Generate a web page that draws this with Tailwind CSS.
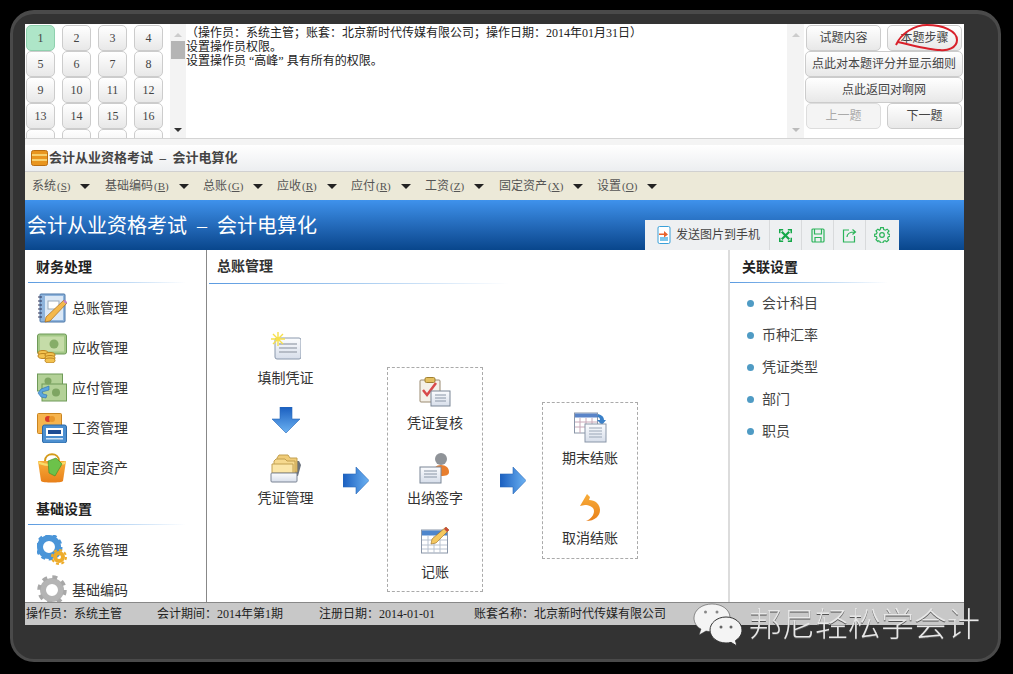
<!DOCTYPE html>
<html lang="zh-CN">
<head>
  <meta charset="UTF-8" />
  <meta name="viewport" content="width=device-width, initial-scale=1.0" />
  <title>会计从业资格考试 - 会计电算化</title>
  <script src="https://cdn.jsdelivr.net/npm/@tailwindcss/browser@4"></script>
</head>
<body class="bg-black w-[1013px] h-[674px] overflow-hidden font-['Liberation_Serif','Noto_Sans_CJK_SC',serif] text-[#333]">
  <svg width="0" height="0" class="absolute">
    <defs>
      <linearGradient id="blueH" x1="0" x2="1" y1="0" y2="0"><stop offset="0" stop-color="#1a5fc0"/><stop offset="1" stop-color="#6cb2f2"/></linearGradient>
      <linearGradient id="blueV" x1="0" x2="0" y1="0" y2="1"><stop offset="0" stop-color="#1a5fc0"/><stop offset="1" stop-color="#6cb2f2"/></linearGradient>
      <linearGradient id="paper" x1="0" x2="0" y1="0" y2="1"><stop offset="0" stop-color="#fbfcfe"/><stop offset="1" stop-color="#d7deea"/></linearGradient>
      <linearGradient id="orange" x1="0" x2="0" y1="0" y2="1"><stop offset="0" stop-color="#f8ad3a"/><stop offset="1" stop-color="#e8801a"/></linearGradient>
    </defs>
  </svg>

  <!-- outer window frame -->
  <div class="relative mt-[10px] ml-[10px] w-[991px] h-[652px] rounded-[24px] bg-[#333] border-[3px] border-t-[4px] border-[#4a4a4a] pt-[10px] pl-[12px]">
    <div class="w-[939px] h-[601px] bg-white flex flex-col overflow-hidden">

      <!-- question panel -->
      <div class="h-[114px] flex bg-white shrink-0">
        <div class="w-[145px] h-[114px] overflow-hidden pl-px pt-px shrink-0">
          <div class="grid grid-cols-[29px_29px_29px_29px] gap-x-[7px] auto-rows-[26px] text-[12px] text-[#444]">
            <div class="rounded-[5px] border border-[#8fd0ae] bg-[#aee6c8] flex items-center justify-center">1</div>
            <div class="rounded-[5px] border border-[#ccc] bg-linear-to-b from-white to-[#e8e8e8] flex items-center justify-center">2</div>
            <div class="rounded-[5px] border border-[#ccc] bg-linear-to-b from-white to-[#e8e8e8] flex items-center justify-center">3</div>
            <div class="rounded-[5px] border border-[#ccc] bg-linear-to-b from-white to-[#e8e8e8] flex items-center justify-center">4</div>
            <div class="rounded-[5px] border border-[#ccc] bg-linear-to-b from-white to-[#e8e8e8] flex items-center justify-center">5</div>
            <div class="rounded-[5px] border border-[#ccc] bg-linear-to-b from-white to-[#e8e8e8] flex items-center justify-center">6</div>
            <div class="rounded-[5px] border border-[#ccc] bg-linear-to-b from-white to-[#e8e8e8] flex items-center justify-center">7</div>
            <div class="rounded-[5px] border border-[#ccc] bg-linear-to-b from-white to-[#e8e8e8] flex items-center justify-center">8</div>
            <div class="rounded-[5px] border border-[#ccc] bg-linear-to-b from-white to-[#e8e8e8] flex items-center justify-center">9</div>
            <div class="rounded-[5px] border border-[#ccc] bg-linear-to-b from-white to-[#e8e8e8] flex items-center justify-center">10</div>
            <div class="rounded-[5px] border border-[#ccc] bg-linear-to-b from-white to-[#e8e8e8] flex items-center justify-center">11</div>
            <div class="rounded-[5px] border border-[#ccc] bg-linear-to-b from-white to-[#e8e8e8] flex items-center justify-center">12</div>
            <div class="rounded-[5px] border border-[#ccc] bg-linear-to-b from-white to-[#e8e8e8] flex items-center justify-center">13</div>
            <div class="rounded-[5px] border border-[#ccc] bg-linear-to-b from-white to-[#e8e8e8] flex items-center justify-center">14</div>
            <div class="rounded-[5px] border border-[#ccc] bg-linear-to-b from-white to-[#e8e8e8] flex items-center justify-center">15</div>
            <div class="rounded-[5px] border border-[#ccc] bg-linear-to-b from-white to-[#e8e8e8] flex items-center justify-center">16</div>
            <div class="rounded-[5px] border border-[#ccc] bg-linear-to-b from-white to-[#e8e8e8]"></div>
            <div class="rounded-[5px] border border-[#ccc] bg-linear-to-b from-white to-[#e8e8e8]"></div>
            <div class="rounded-[5px] border border-[#ccc] bg-linear-to-b from-white to-[#e8e8e8]"></div>
            <div class="rounded-[5px] border border-[#ccc] bg-linear-to-b from-white to-[#e8e8e8]"></div>
          </div>
        </div>
        <!-- left scrollbar -->
        <div class="w-[16px] h-[114px] bg-[#f3f3f3] flex flex-col items-center shrink-0">
          <div class="mt-[9px] w-0 h-0 border-x-[4px] border-x-transparent border-b-[4px] border-b-[#ccc]"></div>
          <div class="mt-[4px] w-[14px] h-[18px] bg-[#b5b5b5]"></div>
          <div class="mt-auto mb-[6px] w-0 h-0 border-x-[4px] border-x-transparent border-t-[4px] border-t-[#333]"></div>
        </div>
        <div class="w-[601px] shrink-0 pt-[2px] text-[12px] leading-[14px] text-[#222]">
          <p>（操作员：系统主管；账套：北京新时代传媒有限公司；操作日期：2014年01月31日）</p>
          <p>设置操作员权限。</p>
          <p>设置操作员 “高峰” 具有所有的权限。</p>
        </div>
        <!-- right scrollbar -->
        <div class="w-[17px] h-[114px] bg-[#f3f3f3] flex flex-col items-center shrink-0">
          <div class="mt-[9px] w-0 h-0 border-x-[4px] border-x-transparent border-b-[4px] border-b-[#ccc]"></div>
          <div class="mt-auto mb-[6px] w-0 h-0 border-x-[4px] border-x-transparent border-t-[4px] border-t-[#bbb]"></div>
        </div>
        <!-- question buttons -->
        <div class="w-[160px] shrink-0 pt-px px-px text-[12px] text-[#444]">
          <div class="h-[26px] flex justify-between px-px">
            <div class="w-[75px] rounded-[5px] border border-[#ccc] bg-linear-to-b from-white to-[#e8e8e8] flex items-center justify-center">试题内容</div>
            <div class="w-[75px] rounded-[5px] border border-[#ccc] bg-linear-to-b from-white to-[#e8e8e8] flex items-center justify-center">本题步骤</div>
          </div>
          <div class="h-[26px] rounded-[5px] border border-[#ccc] bg-linear-to-b from-white to-[#e8e8e8] flex items-center justify-center">点此对本题评分并显示细则</div>
          <div class="h-[26px] rounded-[5px] border border-[#ccc] bg-linear-to-b from-white to-[#e8e8e8] flex items-center justify-center">点此返回对啊网</div>
          <div class="h-[26px] flex justify-between px-px">
            <div class="w-[75px] rounded-[5px] border border-[#ddd] bg-[#f4f4f4] text-[#aaa] flex items-center justify-center">上一题</div>
            <div class="w-[75px] rounded-[5px] border border-[#ccc] bg-linear-to-b from-white to-[#e8e8e8] flex items-center justify-center">下一题</div>
          </div>
        </div>
      </div>
      <div class="h-[7px] shrink-0 bg-[#f4f4f4] border-t border-[#d4d4d4]"></div>

      <!-- title bar -->
      <div class="h-[27px] shrink-0 flex items-center pl-[6px] bg-linear-to-b from-white to-[#eceef0] border-b border-[#d0d0d0]">
        <svg width="17" height="16" viewBox="0 0 17 16" class="shrink-0">
          <rect x="0.5" y="0.5" width="16" height="15" rx="2" fill="#e8951f" stroke="#b96d12"/>
          <path d="M1 5h15M1 10h15" stroke="#fbe38a" stroke-width="1.6"/>
        </svg>
        <span class="ml-px text-[13px] font-bold text-[#444] whitespace-pre">会计从业资格考试  –  会计电算化</span>
      </div>

      <!-- menu bar -->
      <div class="h-[28px] shrink-0 flex items-center pl-[7px] bg-[#ece9d8] text-[12px] text-[#555]">
        <div class="w-[73px] shrink-0 flex items-center"><span>系统</span><span class="ml-px text-[11px]">(<u>S</u>)</span><span class="ml-[10px] w-0 h-0 border-x-[5px] border-x-transparent border-t-[5px] border-t-[#222]"></span></div>
        <div class="w-[98px] shrink-0 flex items-center"><span>基础编码</span><span class="ml-px text-[11px]">(<u>B</u>)</span><span class="ml-[10px] w-0 h-0 border-x-[5px] border-x-transparent border-t-[5px] border-t-[#222]"></span></div>
        <div class="w-[74px] shrink-0 flex items-center"><span>总账</span><span class="ml-px text-[11px]">(<u>G</u>)</span><span class="ml-[10px] w-0 h-0 border-x-[5px] border-x-transparent border-t-[5px] border-t-[#222]"></span></div>
        <div class="w-[74px] shrink-0 flex items-center"><span>应收</span><span class="ml-px text-[11px]">(<u>R</u>)</span><span class="ml-[10px] w-0 h-0 border-x-[5px] border-x-transparent border-t-[5px] border-t-[#222]"></span></div>
        <div class="w-[74px] shrink-0 flex items-center"><span>应付</span><span class="ml-px text-[11px]">(<u>R</u>)</span><span class="ml-[10px] w-0 h-0 border-x-[5px] border-x-transparent border-t-[5px] border-t-[#222]"></span></div>
        <div class="w-[74px] shrink-0 flex items-center"><span>工资</span><span class="ml-px text-[11px]">(<u>Z</u>)</span><span class="ml-[10px] w-0 h-0 border-x-[5px] border-x-transparent border-t-[5px] border-t-[#222]"></span></div>
        <div class="w-[98px] shrink-0 flex items-center"><span>固定资产</span><span class="ml-px text-[11px]">(<u>X</u>)</span><span class="ml-[10px] w-0 h-0 border-x-[5px] border-x-transparent border-t-[5px] border-t-[#222]"></span></div>
        <div class="w-[74px] shrink-0 flex items-center"><span>设置</span><span class="ml-px text-[11px]">(<u>O</u>)</span><span class="ml-[10px] w-0 h-0 border-x-[5px] border-x-transparent border-t-[5px] border-t-[#222]"></span></div>
      </div>

      <!-- banner -->
      <div class="h-[50px] shrink-0 flex justify-between items-end bg-linear-to-b from-[#3f92ec] to-[#08468c]">
        <div class="self-center pl-[2px] mt-[2px] text-[20px] text-white whitespace-pre leading-none">会计从业资格考试  –  会计电算化</div>
        <div class="mr-[65px] h-[30px] w-[254px] bg-[#eef0f2] flex items-center text-[12px] text-[#444]">
          <div class="w-[125px] h-full flex items-center pl-[12px] border-r border-[#d8dadc]">
            <svg width="14" height="18" viewBox="0 0 14 18" class="shrink-0">
              <rect x="1" y="0.5" width="12" height="17" rx="1.5" fill="#fff" stroke="#3aa0d8"/>
              <rect x="3" y="11" width="8" height="4" fill="#7cc6ea"/>
              <path d="M2 7.5h5V5l4 3.5-4 3V9H2z" fill="#e8622a"/>
            </svg>
            <span class="ml-[5px]">发送图片到手机</span>
          </div>
          <div class="w-[32px] h-full flex items-center justify-center border-r border-[#d8dadc]">
            <svg width="13" height="13" viewBox="0 0 14 14" fill="none" stroke="#16a84a" stroke-width="2.400"><path d="M3 3l8 8M11 3l-8 8"/><path d="M0.800 4.500V0.800h3.700M9.500 0.800h3.700v3.700M13.200 9.500v3.700H9.500M4.500 13.200H0.800V9.500" stroke-width="1.600"/></svg>
          </div>
          <div class="w-[32px] h-full flex items-center justify-center border-r border-[#d8dadc]">
            <svg width="14" height="15" viewBox="0 0 14 15" fill="none" stroke="#2bb45a" stroke-width="1.200"><rect x="1" y="1" width="12" height="13" rx="1"/><path d="M3.500 1v5h7V1M4 14V9.500h6V14"/></svg>
          </div>
          <div class="w-[32px] h-full flex items-center justify-center border-r border-[#d8dadc]">
            <svg width="15" height="15" viewBox="0 0 15 15" fill="none" stroke="#2bb45a" stroke-width="1.200"><path d="M7 2H1.500v12h11V8"/><path d="M5 9c0-3 3-5 8-5M10.500 1.500L13.500 4l-3 2.500"/></svg>
          </div>
          <div class="w-[32px] h-full flex items-center justify-center">
            <svg width="16" height="16" viewBox="0 0 24 24" fill="none" stroke="#2bb45a" stroke-width="1.800"><circle cx="12" cy="12" r="3.500"/><path d="M10 2h4l.6 3 2.500 1 2.600-1.600 2.800 2.800L20.400 9.800l1 2.200 2.600.6v3l-2.600.6-1 2.400 1.600 2.600-2.800 2.800-2.600-1.600-2.500 1-.6 2.600h-4l-.6-2.600-2.500-1L5.800 23.800 3 21l1.600-2.600-1-2.400L1 15.400v-3l2.600-.6 1-2.200L3 7.200l2.800-2.800 2.600 1.600 1-1z" transform="translate(0 -1) scale(1 .96)"/></svg>
          </div>
        </div>
      </div>

      <!-- main area -->
      <div class="h-[352px] shrink-0 flex overflow-hidden">
        <!-- sidebar -->
        <div class="w-[182px] shrink-0 border-r border-[#888] pl-[3px] overflow-hidden">
          <div class="h-[32px] flex items-end pl-[8px] pb-[7px] text-[14px] font-bold leading-none text-[#222]">财务处理</div>
          <div class="h-px w-[158px] bg-linear-to-r from-[#5a9ae0] via-[#a8ccf0] to-white"></div>
          <div class="mt-[10px] pl-[9px] flex flex-col gap-[10px] text-[14px] text-[#333]">
            <div class="h-[30px] flex items-center">
              <svg width="30" height="30" viewBox="0 0 30 30" class="shrink-0"><rect x="3" y="1" width="25" height="28" rx="1" fill="#8fb4dc" stroke="#4a77a8"/><rect x="8" y="3" width="18" height="24" fill="#dbe8f6"/><path d="M1 4h4M1 8h4M1 12h4M1 16h4M1 20h4M1 24h4" stroke="#335"/><rect x="11" y="8" width="11" height="8" fill="#fff" stroke="#9ab"/><path d="M27 7l3 3-17 18-5 1 1-5z" fill="#f4b84a" stroke="#a86c1a" stroke-width=".7"/><path d="M26 8l3 3 1-2-2-2z" fill="#c080d0"/></svg>
              <span class="ml-[5px]">总账管理</span>
            </div>
            <div class="h-[30px] flex items-center">
              <svg width="30" height="30" viewBox="0 0 30 30" class="shrink-0"><rect x="0.500" y="1" width="29" height="20" rx="2" fill="#a3c887" stroke="#6e9a58"/><rect x="3" y="3.500" width="24" height="15" fill="#c5dca8"/><circle cx="17" cy="11" r="4.500" fill="#86ad68"/><ellipse cx="6" cy="20" rx="5" ry="2.500" fill="#f3c24f" stroke="#bd8420"/><ellipse cx="6" cy="23" rx="5" ry="2.500" fill="#f3c24f" stroke="#bd8420"/><ellipse cx="13" cy="22" rx="5" ry="2.500" fill="#f3c24f" stroke="#bd8420"/><ellipse cx="13" cy="25" rx="5" ry="2.500" fill="#f3c24f" stroke="#bd8420"/><ellipse cx="13" cy="27.500" rx="5" ry="2.500" fill="#f3c24f" stroke="#bd8420"/></svg>
              <span class="ml-[5px]">应收管理</span>
            </div>
            <div class="h-[30px] flex items-center">
              <svg width="30" height="30" viewBox="0 0 30 30" class="shrink-0"><rect x="0.500" y="1" width="25" height="17" fill="#b3d197" stroke="#6e9a58"/><rect x="5" y="11" width="24.500" height="17" fill="#b3d197" stroke="#6e9a58"/><circle cx="19" cy="19.500" r="4" fill="#7ea562"/><circle cx="11" cy="8" r="3.500" fill="#7ea562"/><path d="M12 13l-8 3 -3 4 3 4 5 1 1-3-4-1-1-2 7-2z" fill="#5aa5df" stroke="#2b70ad" stroke-width=".6"/></svg>
              <span class="ml-[5px]">应付管理</span>
            </div>
            <div class="h-[30px] flex items-center">
              <svg width="30" height="30" viewBox="0 0 30 30" class="shrink-0"><rect x="0.500" y="0.500" width="24" height="20" rx="1" fill="#f6b44e" stroke="#c98420"/><circle cx="11" cy="6" r="3" fill="#d83a2a"/><circle cx="15" cy="6" r="3" fill="#e8962a"/><rect x="5.500" y="12" width="24" height="18" rx="2" fill="#4c8fd0" stroke="#2b68a5"/><rect x="9" y="15" width="17" height="8" fill="#fff"/><rect x="11" y="17" width="13" height="4" fill="#1d4c94"/><rect x="9" y="25" width="17" height="1.500" fill="#cfe2f4"/></svg>
              <span class="ml-[5px]">工资管理</span>
            </div>
            <div class="h-[30px] flex items-center">
              <svg width="30" height="30" viewBox="0 0 30 30" class="shrink-0"><path d="M8 8c0-9 14-9 14 0" fill="none" stroke="#d49a1a" stroke-width="2"/><path d="M1 8h28l-3 20c-1 2-21 2-22 0z" fill="url(#orange)"/><path d="M1 8c8 4 20 4 28 0l-1 3c-8 3-18 3-26 0z" fill="#f9dc6a"/><path d="M11 8l8-3 6 6-7 12-6-3z" fill="#6cc24a" stroke="#3d8a2a" stroke-width=".6"/></svg>
              <span class="ml-[5px]">固定资产</span>
            </div>
          </div>
          <div class="h-[41px] flex items-end pl-[8px] pb-[7px] text-[14px] font-bold leading-none text-[#222]">基础设置</div>
          <div class="h-px w-[158px] bg-linear-to-r from-[#5a9ae0] via-[#a8ccf0] to-white"></div>
          <div class="mt-[10px] pl-[9px] flex flex-col gap-[10px] text-[14px] text-[#333]">
            <div class="h-[30px] flex items-center">
              <svg width="30" height="30" viewBox="0 0 30 30" class="shrink-0"><circle cx="12" cy="12" r="9" fill="none" stroke="#4a95d8" stroke-width="6"/><circle cx="12" cy="12" r="12" fill="none" stroke="#4a95d8" stroke-width="3" stroke-dasharray="4 3.500"/><circle cx="22" cy="22" r="4" fill="none" stroke="#eeac2a" stroke-width="4"/><circle cx="22" cy="22" r="7" fill="none" stroke="#eeac2a" stroke-width="2" stroke-dasharray="3 2.500"/></svg>
              <span class="ml-[5px]">系统管理</span>
            </div>
            <div class="h-[30px] flex items-center">
              <svg width="30" height="30" viewBox="0 0 30 30" class="shrink-0"><circle cx="15" cy="15" r="9" fill="none" stroke="#b4b4b4" stroke-width="6"/><circle cx="15" cy="15" r="13" fill="none" stroke="#a8a8a8" stroke-width="3.500" stroke-dasharray="5 5.200"/></svg>
              <span class="ml-[5px]">基础编码</span>
            </div>
          </div>
        </div>

        <!-- center -->
        <div class="w-[523px] shrink-0 border-r-2 border-[#dcdcdc]">
          <div class="h-[33px] flex items-end pl-[10px] pb-[9px] text-[14px] font-bold leading-none text-[#333]">总账管理</div>
          <div class="h-px ml-[2px] w-[300px] bg-linear-to-r from-[#5a9ae0] via-[#a8ccf0] to-white"></div>

          <div class="flex items-start text-[14px] text-[#333]">
            <!-- first column -->
            <div class="w-[157px] shrink-0 mt-[48px] flex flex-col items-center">
              <svg width="30" height="30" viewBox="0 0 30 30"><rect x="4" y="6" width="26" height="21" rx="2" fill="url(#paper)" stroke="#8a98ac"/><path d="M8 12h18M8 16h18M8 20h18" stroke="#a6adb8" stroke-width="1.500"/><path d="M7 0v14M0 7h14M2 2l10 10M12 2L2 12" stroke="#f7e04a" stroke-width="1.400"/></svg>
              <div class="mt-[8px] leading-[18px]">填制凭证</div>
              <svg class="mt-[19px]" width="28" height="26" viewBox="0 0 28 26"><path d="M8 0h12v12h8L14 26 0 12h8z" fill="url(#blueV)" stroke="#2a68b8" stroke-width=".6"/></svg>
              <svg class="mt-[21px]" width="32" height="30" viewBox="0 0 32 30"><path d="M4 20V7h25l2 4-3 11z" fill="#6b727c"/><path d="M7 4l2-3h9l2 3h7v14H7z" fill="#f0cc78" stroke="#c2a050"/><path d="M4 7l2-2h9l2 2h8v12H4z" fill="#f6d98e" stroke="#c2a050"/><path d="M2 10h21v9H2z" fill="#fbe6a8" stroke="#c2a050"/><rect x="1" y="19" width="26" height="9" rx="1" fill="url(#paper)" stroke="#7b8494"/></svg>
              <div class="mt-[6px] leading-[18px]">凭证管理</div>
            </div>
            <!-- arrow 1 -->
            <svg class="mt-[183px] ml-[-21px] shrink-0" width="26" height="27" viewBox="0 0 26 27"><path d="M0 7h13V0l13 13.500L13 27v-7H0z" fill="url(#blueH)" stroke="#2a68b8" stroke-width=".6"/></svg>
            <!-- review box -->
            <div class="ml-[18px] mt-[83px] w-[96px] h-[225px] shrink-0 border border-dashed border-[#aaa] flex flex-col items-center pt-[9px]">
              <svg width="32" height="30" viewBox="0 0 32 30"><rect x="1" y="3" width="20" height="22" rx="1" fill="#f4f0e8" stroke="#9a8a70"/><rect x="6" y="0.500" width="10" height="5" rx="1.500" fill="#e4c060" stroke="#a08030"/><path d="M4 13l4 5 9-12" fill="none" stroke="#d84a4a" stroke-width="2.500"/><rect x="12" y="14" width="19" height="15" fill="url(#paper)" stroke="#7a8696"/><path d="M16 18h11M16 21h11M16 24h11" stroke="#8a96a6"/></svg>
              <div class="mt-[8px] leading-[18px]">凭证复核</div>
              <svg class="mt-[19px]" width="32" height="32" viewBox="0 0 32 32"><circle cx="22" cy="7" r="6" fill="#8f9398"/><path d="M14 21c0-5 3-8 8-8s8 3 8 7c0 3-3 4-8 4z" fill="#e87e2e"/><rect x="1" y="15" width="21" height="16" fill="url(#paper)" stroke="#7a8696"/><path d="M5 19h13M5 22h13M5 25h13" stroke="#8a96a6"/></svg>
              <div class="mt-[6px] leading-[18px]">出纳签字</div>
              <svg class="mt-[19px]" width="28" height="27" viewBox="0 0 28 27"><rect x="0.500" y="3" width="26" height="23" fill="#fff" stroke="#8a96a8"/><rect x="1" y="3.500" width="25" height="5" fill="#4d86cc"/><path d="M1 13h25M1 18h25M1 22h25M7 9v17M13 9v17M19 9v17" stroke="#b8c2d0"/><path d="M25 0l3 3-13 13-5 1 1-5z" fill="#f4c860" stroke="#9a6c20" stroke-width=".6"/><path d="M25 0l3 3-2 2-3-3z" fill="#c84a3a"/></svg>
              <div class="mt-[10px] leading-[18px]">记账</div>
            </div>
            <!-- arrow 2 -->
            <svg class="mt-[183px] ml-[17px] shrink-0" width="26" height="27" viewBox="0 0 26 27"><path d="M0 7h13V0l13 13.500L13 27v-7H0z" fill="url(#blueH)" stroke="#2a68b8" stroke-width=".6"/></svg>
            <!-- close box -->
            <div class="ml-[16px] mt-[118px] w-[96px] h-[157px] shrink-0 border border-dashed border-[#aaa] flex flex-col items-center pt-[9px]">
              <svg width="33" height="31" viewBox="0 0 33 31"><rect x="0.500" y="1" width="23" height="20" fill="#fff" stroke="#8a96a8"/><rect x="1" y="1.500" width="22" height="4" fill="#5a84c8"/><path d="M1 10h22M1 15h22M6 6v15M12 6v15M18 6v15" stroke="#c8a8b8"/><path d="M24 2c4 1 6 3 6 6h2l-4 5-5-5h3c0-2-1-3-3-3z" fill="#3a80c8"/><rect x="11" y="12" width="21" height="18" fill="url(#paper)" stroke="#8a96a8"/><path d="M15 16h13M15 19h13M15 22h13M15 25h13" stroke="#9aa6b6"/></svg>
              <div class="mt-[7px] leading-[18px]">期末结账</div>
              <svg class="mt-[26px]" width="20" height="27" viewBox="0 0 20 27"><path d="M7 0L0 12l5-1c4 0 9 2 9 6 0 4-3 8-8 10 9 0 14-5 14-11 0-6-5-10-11-10L10 3z" fill="url(#orange)"/></svg>
              <div class="mt-[9px] leading-[18px]">取消结账</div>
            </div>
          </div>
        </div>

        <!-- right -->
        <div class="flex-1">
          <div class="h-[32px] flex items-end pl-[12px] pb-[7px] text-[14px] font-bold leading-none text-[#222]">关联设置</div>
          <div class="h-px w-[158px] bg-linear-to-r from-[#5a9ae0] via-[#a8ccf0] to-white"></div>
          <ul class="mt-[4px] pl-[17px] text-[14px] text-[#444]">
            <li class="h-[32px] flex items-center"><span class="w-[7px] h-[7px] rounded-full bg-[#4f9bc4]"></span><span class="ml-[8px]">会计科目</span></li>
            <li class="h-[32px] flex items-center"><span class="w-[7px] h-[7px] rounded-full bg-[#4f9bc4]"></span><span class="ml-[8px]">币种汇率</span></li>
            <li class="h-[32px] flex items-center"><span class="w-[7px] h-[7px] rounded-full bg-[#4f9bc4]"></span><span class="ml-[8px]">凭证类型</span></li>
            <li class="h-[32px] flex items-center"><span class="w-[7px] h-[7px] rounded-full bg-[#4f9bc4]"></span><span class="ml-[8px]">部门</span></li>
            <li class="h-[32px] flex items-center"><span class="w-[7px] h-[7px] rounded-full bg-[#4f9bc4]"></span><span class="ml-[8px]">职员</span></li>
          </ul>
        </div>
      </div>

      <!-- status bar -->
      <div class="h-[23px] shrink-0 flex items-center bg-[#c8c8c8] border-t border-[#888] text-[12px] text-[#222] pl-px">
        <span class="w-[131px] shrink-0">操作员：系统主管</span>
        <span class="w-[162px] shrink-0">会计期间：2014年第1期</span>
        <span class="w-[155px] shrink-0">注册日期：2014-01-01</span>
        <span class="shrink-0">账套名称：北京新时代传媒有限公司</span>
      </div>
    </div>

    <!-- red marker around 本题步骤 -->
    <svg class="absolute left-[882px] top-[9px]" width="66" height="30" viewBox="0 0 66 30" fill="none" stroke="#d8202a" stroke-width="2">
      <path d="M1 22C6 10 20 2 32 2c16 0 30 6 30 15 0 8-10 11-17 10C35 27 25 24 3 19"/>
    </svg>

    <!-- wechat watermark -->
    <div class="absolute left-[680px] top-[589px] flex items-center text-white">
      <svg width="50" height="44" viewBox="0 0 50 44" fill="#f4f4f4">
        <path d="M19 1C9 1 1 7 1 15c0 5 3 9 7 11l-2 6 7-4c2 .5 4 .7 6 .7 10 0 18-6 18-14S29 1 19 1z" stroke="#333" stroke-width=".5"/>
        <path d="M33 14c-9 0-16 6-16 13s7 13 16 13c1.500 0 3-.2 5-.6l6 3.600-1.500-5.400c4-2.500 6.500-6.300 6.500-10.600 0-7-7-13-16-13z" stroke="#333"/>
        <circle cx="12.500" cy="9" r="1.500" fill="#888"/><circle cx="24" cy="9" r="1.500" fill="#888"/><circle cx="28" cy="24" r="1.500" fill="#666"/><circle cx="38" cy="24" r="1.500" fill="#666"/>
      </svg>
      <span class="ml-[6px] mb-[6px] text-[33px] leading-none font-['Noto_Sans_CJK_SC',sans-serif] font-light text-[#e8e8e8] whitespace-nowrap drop-shadow-[0_1px_0_#555]">邦尼轻松学会计</span>
    </div>
  </div>
</body>
</html>
